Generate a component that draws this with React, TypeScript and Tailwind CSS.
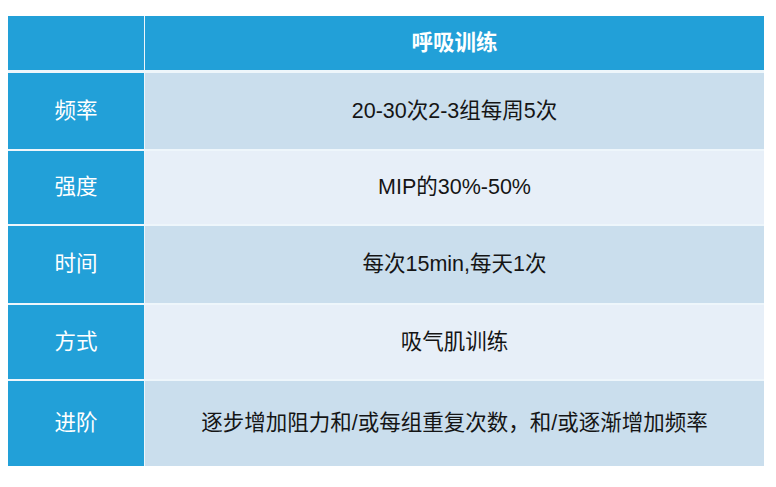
import React from 'react';

const rows = [
  { label: '频率', value: '20-30次2-3组每周5次', h: 'h-[76px]', bg: 'bg-[#cadeed]' },
  { label: '强度', value: 'MIP的30%-50%', h: 'h-[73px]', bg: 'bg-[#e7eff8]' },
  { label: '时间', value: '每次15min,每天1次', h: 'h-[77px]', bg: 'bg-[#cadeed]' },
  { label: '方式', value: '吸气肌训练', h: 'h-[74px]', bg: 'bg-[#e7eff8]' },
  { label: '进阶', value: '逐步增加阻力和/或每组重复次数，和/或逐渐增加频率', h: 'h-[85px]', bg: 'bg-[#cadeed]' },
];

export default function App() {
  return (
    <div
      className="w-[776px] h-[487px] bg-white pt-[16px] pl-[8px]"
      style={{ fontFamily: "'Liberation Sans', 'Noto Sans CJK SC', sans-serif" }}
    >
      <div className="w-[756px] flex flex-col gap-[2px] bg-[#eef6fb]">
        {/* header */}
        <div className="flex h-[54px] gap-[1px] mb-[1px]">
          <div className="w-[136px] bg-[#22a0d8]" />
          <div className="flex-1 bg-[#22a0d8] flex items-center justify-center text-white text-[21.5px] font-bold">
            呼吸训练
          </div>
        </div>
        {rows.map((r) => (
          <div key={r.label} className={`flex gap-[1px] ${r.h}`}>
            <div className="w-[136px] bg-[#22a0d8] flex items-center justify-center text-white text-[21.5px]">
              {r.label}
            </div>
            <div className={`flex-1 ${r.bg} flex items-center justify-center text-[#151515] text-[21.5px]`}>
              {r.value}
            </div>
          </div>
        ))}
      </div>
    </div>
  );
}
